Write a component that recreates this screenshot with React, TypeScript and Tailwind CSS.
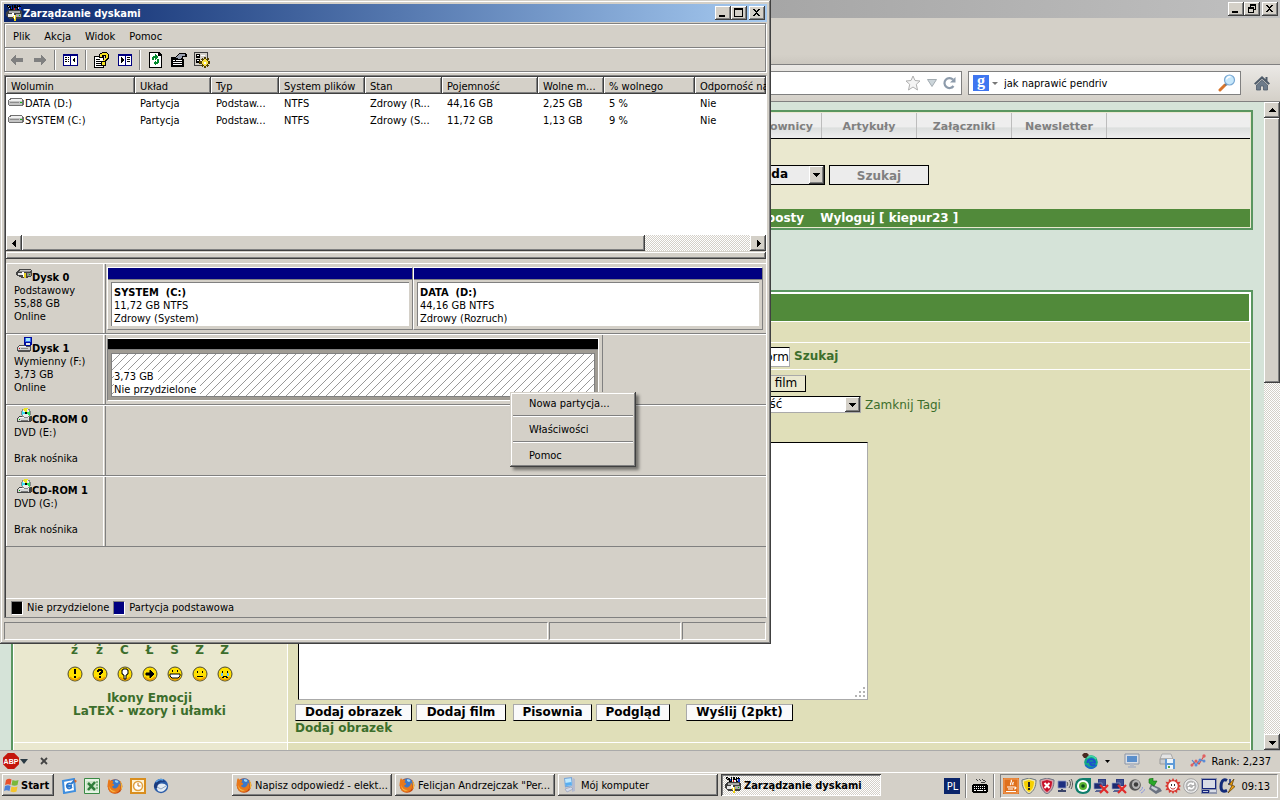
import React from 'react';
import clsx from 'clsx';

// classic Windows bevels
const raised = 'bg-[#d4d0c8] shadow-[inset_-1px_-1px_#404040,inset_1px_1px_#fff,inset_-2px_-2px_#808080]';
const dither = 'bg-[repeating-conic-gradient(#fff_0_25%,#d4d0c8_0_50%)] bg-[length:2px_2px]';
const ui = "font-['DejaVu_Sans_Condensed','DejaVu_Sans',sans-serif] text-[11px] leading-[13px] text-black";
const forum = "font-['DejaVu_Sans',sans-serif] text-[12px] leading-[13px]";

type IconProps = { children: React.ReactNode; className?: string; box?: string; crisp?: boolean };

const Svg = ({ children, className = 'size-4', box = '0 0 16 16', crisp }: IconProps) => (
  <svg
    viewBox={box}
    className={clsx('block shrink-0', className)}
    fill="none"
    shapeRendering={crisp ? 'crispEdges' : 'auto'}
    aria-hidden="true"
  >
    {children}
  </svg>
);

const Triangle = ({ dir }: { dir: 'up' | 'down' | 'left' | 'right' }) => (
  <Svg className="size-[9px]" box="0 0 9 9" crisp>
    {dir === 'up' && <path d="M4 2h1v1h1v1h1v1h1v1H1V5h1V4h1V3h1z" fill="#000" />}
    {dir === 'down' && <path d="M1 3h7v1H7v1H6v1H5v1H4V6H3V5H2V4H1z" fill="#000" />}
    {dir === 'left' && <path d="M6 1v7H5V7H4V6H3V5H2V4h1V3h1V2h1V1z" fill="#000" />}
    {dir === 'right' && <path d="M3 1h1v1h1v1h1v1h1v1H6v1H5v1H4v1H3z" fill="#000" />}
  </Svg>
);

const DiskManagerIcon = () => (
  <Svg crisp>
    <path d="M1 0h2v1h2v1h1v3H4V3H2V2H1zM6 0h1v5H6zM8 0h2v3H8zM11 0h1v1h1V0h1v1h1v4h-4V3h-1V2h1z" fill="#000" />
    <path d="M2 1h1v1H2zM3 3h1v1H3zM12 2h1v2h-1z" fill="#c3c3c3" />
    <path d="M5 2h1v2H5zM13 2h2v3h-2z" fill="#0a32d8" />
    <path d="M8 3h1v3H8z" fill="#e01010" />
    <path d="M2 5h12l2 2v5l-2 2H3l-3-3V8z" fill="#404040" />
    <path d="M3 6h11v2H3zM10 9h5v3h-5z" fill="#a9a9a9" />
    <path d="M2 9h5v3H2z" fill="#e8e8e8" />
    <path d="M6 8h2v3H6zM8 10h2v5H8z" fill="#fff" />
    <path d="M9 10h1v6H8v-2h1zM7 11h1v2H7z" fill="#f0d010" />
    <path d="M13 10h1v1h-1z" fill="#0b0" />
  </Svg>
);

const VolumeIcon = () => (
  <Svg crisp>
    <path d="M2 3h12v1h1v1h1v5h-1v1H1v-1H0V5h1V4h1z" fill="#707070" />
    <path d="M3 4h11v1H3zM1 5h13v1H1z" fill="#f0f0f0" />
    <path d="M1 6h13v4H1z" fill="#c4c4c4" />
    <path d="M2 7h9v1H2z" fill="#8c8c8c" />
    <path d="M12 7h2v1h-2z" fill="#12b812" />
  </Svg>
);

const HardDiskIcon = () => (
  <Svg crisp>
    <path d="M3 3h12v1h1v6h-1v1h-3v1H5v-1H3v-1H1V9H0V6h1V5h1V4h1z" fill="#444" />
    <path d="M4 4h11v1H4z" fill="#c6c6c6" />
    <path d="M3 5h11v1H3zM11 7h4v3h-4z" fill="#8e8e8e" />
    <path d="M2 7h4v2H2z" fill="#e3e3e3" />
    <path d="M6 6h2v3H6zM7 9h2v2H7z" fill="#fff" />
    <path d="M8 7h2v5H8z" fill="#e8d020" />
    <path d="M13 8h1v1h-1z" fill="#0b0" />
  </Svg>
);

const RemovableIcon = () => (
  <Svg crisp>
    <path d="M3 8h11v1h1v5h-1v1H2v-1H1v-4h1V9h1z" fill="#505050" />
    <path d="M2 10h12v3H2z" fill="#cfcfcf" />
    <path d="M3 9h7v1H3z" fill="#f4f4f4" />
    <path d="M3 11h1v1H3z" fill="#e00000" />
    <path d="M5 11h7v1H5z" fill="#888" />
    <path d="M8 0h8v8h-1v1H9V8H8z" fill="#000c9c" />
    <path d="M9 1h6v4H9z" fill="#3a6cf0" />
    <path d="M10 1h4v3h-4z" fill="#9fe8ff" />
    <path d="M10 6h4v2h-4z" fill="#e8e8e8" />
  </Svg>
);

const CdIcon = () => (
  <Svg crisp>
    <path d="M3 8l-2 2v4h13l2-2V8z" fill="#444" />
    <path d="M2 10h11v3H2z" fill="#d6d6d6" />
    <path d="M3 9h10v1H3z" fill="#f6f6f6" />
    <path d="M3 11h1v1H3z" fill="#0b0" />
    <path d="M5 12h7v1H5z" fill="#777" />
    <circle cx="10" cy="5" r="5" fill="#888" />
    <circle cx="10" cy="5" r="4" fill="#ececec" />
    <path d="M10 5L7 1l2-1h3z" fill="#e9e320" />
    <path d="M10 5l4-2v5z" fill="#2ce060" />
    <path d="M10 5L6 7V3z" fill="#36dff2" />
    <path d="M9 4h2v2H9z" fill="#000" />
  </Svg>
);

const FirefoxIcon = () => (
  <Svg>
    <circle cx="8" cy="8.5" r="7.3" fill="#c7480e" />
    <circle cx="8.5" cy="6.5" r="5.2" fill="#3c78c8" />
    <path d="M8 2.500c1.500-.8 3 0 3.500 1.500L10 5 8 4z" fill="#9fd8f5" />
    <path d="M1 4c0-1.500.6-2.500 1.200-3 .2 1 .8 1.500 1.600 1.800C5 2.500 6 3 6.500 3.800L5.300 5.500l1.800.8-.4 1.400-1.700.8c.5 1.700 2.300 2.400 4 1.700 1.600-.6 3-2.200 2.800-4.600 2 1.500 1.600 4.500 1 6C11 15.500 7 16 4 14.500 1 12.500.2 8 1 4z" fill="#e8781a" />
    <path d="M13 3c2 1.500 2.700 4.500 2 7.500l-1.500 2C14.200 9 14 6 13 3z" fill="#f6b53a" />
    <path d="M2 8c1 3.500 4 5.500 7 5-2.500 1.700-6 .8-7-5z" fill="#f9c04a" />
  </Svg>
);

const ComputerIcon = () => (
  <Svg>
    <path d="M2 1l8-1 1 9-8 1.500z" fill="#7aa6d8" />
    <path d="M3 2l6-.8.8 7L4 9z" fill="#bfeaff" />
    <path d="M3 6l6.500-1 .4 3L4 9z" fill="#58aef0" />
    <path d="M11 1l2 1v12l-3 1V9z" fill="#b5bcd0" />
    <path d="M3 12l6-2 2 2-6 3z" fill="#d5dceb" stroke="#8a95b5" strokeWidth=".6" />
  </Svg>
);

const LanIcon = () => (
  <Svg>
    <path d="M5 1h8v7H5z" fill="#2b3b82" />
    <path d="M6 2h6v5H6z" fill="#3e4f90" />
    <path d="M1 5h8v6H1z" fill="#1d2b70" stroke="#9aa4c8" strokeWidth=".7" />
    <path d="M3 12h5v1H3zM2 13h7v1H2z" fill="#5a6795" />
    <path d="M7 7l8 8M15 7l-8 8" stroke="#e02a2a" strokeWidth="2.200" />
  </Svg>
);

const Caption = ({ restore }: { restore?: boolean }) => (
  <div className="flex">
    <button aria-label="Minimalizuj" className={clsx('flex h-[14px] w-4 items-center justify-center', raised)}>
      <Svg className="size-[10px]" box="0 0 10 10" crisp><path d="M1 7h6v2H1z" fill="#000" /></Svg>
    </button>
    <button aria-label={restore ? 'Przywróć' : 'Maksymalizuj'} className={clsx('flex h-[14px] w-4 items-center justify-center', raised)}>
      <Svg className="size-[10px]" box="0 0 10 10" crisp>
        {restore ? (
          <path d="M3 0h6v6H7v3H1V3h2zm1 2v1h3v2h1V2zM2 5v3h4V5z" fill="#000" fillRule="evenodd" />
        ) : (
          <path d="M0 0h9v9H0zm1 2v6h7V2z" fill="#000" fillRule="evenodd" />
        )}
      </Svg>
    </button>
    <button aria-label="Zamknij" className={clsx('ml-[2px] flex h-[14px] w-4 items-center justify-center', raised)}>
      <Svg className="size-[10px]" box="0 0 10 10" crisp>
        <path d="M1 1h2v1h1v1h1V2h1V1h2v1H7v1H6v1H5v1h1v1h1v1h1v1H6V7H5V6H4v1H3v1H1V7h1V6h1V5h1V4H3V3H2V2H1z" fill="#000" />
      </Svg>
    </button>
  </div>
);

const Separator = () => <span className="-ml-px h-5 w-[2px] border-l border-r border-l-[#808080] border-r-white" />;

const Toolbar = () => (
  <div className="flex h-[22px] items-center gap-[7px] pl-1">
    <button aria-label="Wstecz">
      <Svg crisp><path d="M1 8l6-5v3h7v4H7v3z" fill="#808080" /></Svg>
    </button>
    <button aria-label="Dalej">
      <Svg crisp><path d="M15 8l-6-5v3H2v4h7v3z" fill="#808080" /></Svg>
    </button>
    <Separator />
    <button aria-label="Pokaż drzewo">
      <Svg crisp>
        <path d="M0 2h15v12H0z" fill="#000080" />
        <path d="M1 4h6v9H1zM8 4h6v9H8z" fill="#fff" />
        <path d="M2 5h2v1H2zM2 7h2v1H2zM2 9h2v1H2zM5 5h1v1H5zM5 7h1v1H5zM5 9h1v1H5zM12 5v6l-3-3z" fill="#000" />
      </Svg>
    </button>
    <Separator />
    <button aria-label="Pomoc">
      <Svg crisp>
        <path d="M0 4h10v12H0z" fill="#000" />
        <path d="M1 5h8v10H1z" fill="#fff" />
        <path d="M2 7h4v1H2zM2 9h5v1H2zM2 11h6v1H2zM2 13h6v1H2z" fill="#000" />
        <path d="M5 2h1V1h2V0h5v1h1v1h1v5h-1v1h-1v1h-1v5H7V9h2V7h2V4H9v2H5z" fill="#000" />
        <path d="M6 2h2V1h5v1h1v4h-1v1h-1v1h-1v1H9V8h1V7h1V6h1V3H8v2H6zM8 10h3v3H8z" fill="#f4e020" />
      </Svg>
    </button>
    <button aria-label="Pokaż okienko">
      <Svg crisp>
        <path d="M1 2h14v12H1z" fill="#000080" />
        <path d="M2 4h6v9H2zM9 4h5v9H9z" fill="#fff" />
        <path d="M10 5h3v1h-3zM10 7h3v1h-3zM10 9h3v1h-3zM4 5v6l3-3z" fill="#000" />
      </Svg>
    </button>
    <Separator />
    <button aria-label="Odśwież">
      <Svg crisp>
        <path d="M1 0h10l3 3v13H1z" fill="#000" />
        <path d="M2 1h8v3h3v11H2z" fill="#fff" />
        <path d="M4 8V5h1V4h2V2l3 3-3 3V6H6v2zM11 7v4h-1v1H8v2l-3-3 3-3v2h1V7z" fill="#008a2c" />
      </Svg>
    </button>
    <button aria-label="Właściwości">
      <Svg crisp>
        <path d="M0 5h4l4-4h7v1h1v3h-4v2h1v8H0z" fill="#000" />
        <path d="M8 2h6v2h-3v1l-2 2-4-1z" fill="#9aa0b0" />
        <path d="M2 8h2v1H2zM5 8h6v1H5zM2 10h9v1H2zM2 12h9v1H2z" fill="#fff" />
      </Svg>
    </button>
    <button aria-label="Ustawienia">
      <Svg crisp>
        <path d="M0 0h14v14H0z" fill="#404040" />
        <path d="M1 1h12v12H1z" fill="#d4d0c8" />
        <path d="M2 2h4v4H2zM2 7h4v4H2z" fill="#000" />
        <path d="M3 3h2v1H3zM3 8h2v1H3zM7 3h4v1H7zM7 8h4v1H7z" fill="#fff" />
        <path d="M10 5h2v2l2-1 1 1-1 2h2v3h-2l1 2-2 1-1-1v2h-2v-2l-2 1-1-1 1-2H5V9h3L7 7l1-1 2 1z" fill="#504000" />
        <path d="M10 7h2v1h1v1h1v3h-1v1h-1v1h-2v-1H9v-1H8V9h1V8h1z" fill="#f8e040" />
        <path d="M10 10h2v2h-2z" fill="#fff" />
      </Svg>
    </button>
  </div>
);

const columns = [
  { name: 'Wolumin', width: 'w-[129px]' },
  { name: 'Układ', width: 'w-[76px]' },
  { name: 'Typ', width: 'w-[68px]' },
  { name: 'System plików', width: 'w-[86px]' },
  { name: 'Stan', width: 'w-[77px]' },
  { name: 'Pojemność', width: 'w-[96px]' },
  { name: 'Wolne m...', width: 'w-[66px]' },
  { name: '% wolnego', width: 'w-[91px]' },
  { name: 'Odporność na', width: '' },
];

const volumes = [
  ['DATA (D:)', 'Partycja', 'Podstaw...', 'NTFS', 'Zdrowy (R...', '44,16 GB', '2,25 GB', '5 %', 'Nie'],
  ['SYSTEM (C:)', 'Partycja', 'Podstaw...', 'NTFS', 'Zdrowy (S...', '11,72 GB', '1,13 GB', '9 %', 'Nie'],
];

const VolumeList = () => (
  <div>
    <div className="h-[158px] bg-white">
      <table className="w-full table-fixed border-collapse">
        <thead>
          <tr>
            {columns.map((col) => (
              <th
                key={col.name}
                className={clsx('h-[17px] overflow-hidden p-0 pt-px pl-[5px] text-left font-normal whitespace-nowrap', raised, col.width)}
              >
                {col.name}
              </th>
            ))}
          </tr>
        </thead>
        <tbody>
          {volumes.map((row) => (
            <tr key={row[0]}>
              {row.map((cell, i) => (
                <td key={i} className={clsx('h-[17px] p-0 pt-px whitespace-nowrap', i > 0 && 'pl-[5px]')}>
                  {i === 0 ? (
                    <span className="flex h-4 items-center gap-px pl-[2px]">
                      <VolumeIcon />
                      {cell}
                    </span>
                  ) : (
                    cell
                  )}
                </td>
              ))}
            </tr>
          ))}
        </tbody>
      </table>
    </div>
    <div className={clsx('flex h-4', dither)}>
      <button aria-label="Przewiń w lewo" className={clsx('flex w-4 items-center justify-center', raised)}>
        <Triangle dir="left" />
      </button>
      <div className={clsx('w-[82%]', raised)} />
      <button aria-label="Przewiń w prawo" className={clsx('ml-auto flex w-4 items-center justify-center', raised)}>
        <Triangle dir="right" />
      </button>
    </div>
  </div>
);

type DiskRowProps = { icon: React.ReactNode; name: string; lines: string[]; children?: React.ReactNode };

const DiskRow = ({ icon, name, lines, children }: DiskRowProps) => (
  <div className="flex h-[71px] border-t border-b border-t-white border-b-[#808080]">
    <div className="w-[98px] shrink-0 border-r border-l border-white pl-[7px]">
      <div className="flex h-5 items-end pl-[2px] font-bold">
        <span className="self-center">{icon}</span>
        {name}
      </div>
      {lines.map((line, i) => (
        <div key={i} className="h-[13px]">{line}</div>
      ))}
    </div>
    <div className="ml-px flex grow border-l border-[#808080] py-[3px] pr-[3px] pl-px">{children}</div>
  </div>
);

const Partition = ({ name, size, state, grow }: { name: string; size: string; state: string; grow: string }) => (
  <div className={clsx('flex flex-col border border-t-white border-r-[#808080] border-b-[#808080] border-l-white', grow)}>
    <div className="h-3 border-b border-[#808080] bg-[#000080]" />
    <div className="m-[3px] mt-[2px] grow border-t border-l border-[#808080] bg-white pt-[3px] pl-[2px]">
      <div className="font-bold whitespace-pre">{name}</div>
      <div>{size}</div>
      <div>{state}</div>
    </div>
  </div>
);

const DiskGraph = () => (
  <div>
    <DiskRow icon={<HardDiskIcon />} name="Dysk 0" lines={['Podstawowy', '55,88 GB', 'Online']}>
      <Partition name="SYSTEM  (C:)" size="11,72 GB NTFS" state="Zdrowy (System)" grow="basis-[306px]" />
      <Partition name="DATA  (D:)" size="44,16 GB NTFS" state="Zdrowy (Rozruch)" grow="grow basis-[350px]" />
    </DiskRow>
    <DiskRow icon={<RemovableIcon />} name="Dysk 1" lines={['Wymienny (F:)', '3,73 GB', 'Online']}>
      <div className="flex w-[75%] flex-col border border-t-white border-r-white border-b-white border-l-[#808080]">
        <div className="h-3 border-b border-[#808080] bg-black" />
        <div className="grow bg-[#a09c94] p-[3px]">
          <div className="h-full border border-[#808080] bg-white bg-[linear-gradient(135deg,transparent_46%,#999_47%_53%,transparent_54%)] bg-[length:8px_8px] pt-4 pl-[2px]">
            <div><span className="bg-white pr-1">3,73 GB</span></div>
            <div><span className="bg-white pr-1">Nie przydzielone</span></div>
          </div>
        </div>
      </div>
      <div className="-my-[3px] ml-[3px] w-px bg-[#808080]" />
    </DiskRow>
    <DiskRow icon={<CdIcon />} name="CD-ROM 0" lines={['DVD (E:)', '', 'Brak nośnika']} />
    <DiskRow icon={<CdIcon />} name="CD-ROM 1" lines={['DVD (G:)', '', 'Brak nośnika']} />
  </div>
);

const ContextMenu = () => (
  <div
    role="menu"
    className="absolute top-[392px] left-[510px] w-[126px] bg-[#d4d0c8] px-[3px] pt-[2px] pb-[3px] shadow-[inset_-1px_-1px_#404040,inset_1px_1px_#d4d0c8,inset_-2px_-2px_#808080,inset_2px_2px_#fff,3px_3px_3px_rgba(0,0,0,0.45)]"
  >
    {['Nowa partycja...', 'Właściwości', 'Pomoc'].map((item, i) => (
      <React.Fragment key={item}>
        {i > 0 && <div className="my-[3px] h-[2px] border-t border-b border-t-[#808080] border-b-white" />}
        <button role="menuitem" className="block h-[18px] w-full pl-4 text-left">{item}</button>
      </React.Fragment>
    ))}
  </div>
);

const sunken = 'border border-t-[#808080] border-r-white border-b-white border-l-[#808080]';

const DiskManager = () => (
  <div className={clsx('absolute top-0 left-0 w-[771px] max-w-full bg-[#d4d0c8] p-1 shadow-[inset_-1px_-1px_#404040,inset_1px_1px_#d4d0c8,inset_-2px_-2px_#808080,inset_2px_2px_#fff]', ui)}>
    <div className="flex h-[18px] items-center bg-linear-to-r from-[#0a246a] to-[#a6caf0] pr-[2px] pl-[2px]">
      <DiskManagerIcon />
      <h1 className="ml-px grow text-[11px] font-bold text-white">Zarządzanie dyskami</h1>
      <Caption />
    </div>

    <div className="mt-px mr-px border border-[#808080] shadow-[1px_1px_#fff,inset_1px_1px_#fff]">
      <div className="flex h-6 items-center gap-[14px] border-b border-[#808080] pt-px pl-2">
        {['Plik', 'Akcja', 'Widok', 'Pomoc'].map((item) => (
          <button key={item}>{item}</button>
        ))}
      </div>
      <div className="border-t border-white">
        <Toolbar />
      </div>
    </div>

    <div className="mt-[3px] border-t border-r border-b border-l border-t-[#808080] border-r-white border-b-[#808080] border-l-[#808080]">
      <div className="border-t border-l border-[#404040]">
        <VolumeList />
        <div className={clsx('mt-px h-[7px]', raised)} />
        <div className="mt-1">
          <DiskGraph />
          <div className="mt-[51px] flex h-[19px] items-center gap-1 border-t border-white pb-px pl-[5px]">
            <span className={clsx('h-[14px] w-3 bg-black', sunken)} />
            <span>Nie przydzielone</span>
            <span className={clsx('h-[14px] w-3 bg-[#000080]', sunken)} />
            <span>Partycja podstawowa</span>
          </div>
        </div>
      </div>
    </div>

    <div className="mt-1 flex h-[18px] gap-px pr-px">
      <div className={clsx('grow', sunken)} />
      <div className={clsx('w-[132px]', sunken)} />
      <div className={clsx('w-[84px]', sunken)} />
    </div>
    <ContextMenu />
  </div>
);

const BrowserChrome = () => (
  <div className={ui}>
    <div className="flex h-[18px] justify-end bg-linear-to-r from-[#808080] to-[#c0c0c0] pt-[2px] pr-[2px]">
      <Caption restore />
    </div>
    <div className="h-[46px] bg-linear-to-b from-[#d4d0c8] from-80% to-[#cbc7bf]" />
    <div className="flex h-[38px] items-center gap-[6px] border-t border-b border-[#808080] bg-linear-to-b from-[#ebe9e6] to-[#d4d0c8] px-[10px]">
      <div className="flex h-6 grow items-center justify-end gap-[6px] border border-[#808080] bg-white pr-1">
        <Svg><path d="M8 1l2 4.500 5 .5-3.700 3.300L12.500 15 8 12l-4.500 3 1.200-5.700L1 6l5-.5z" fill="#f4f4f4" stroke="#b0b0b0" /></Svg>
        <Svg className="size-[10px]" box="0 0 10 10"><path d="M.5 1.500h9L5 8.500z" fill="#ccd5da" stroke="#a3acb1" /></Svg>
        <Svg className="size-[14px]" box="0 0 14 14">
          <path d="M10.500 10A5 5 0 1 1 10 3.500" stroke="#8d9bab" strokeWidth="2.200" />
          <path d="M12.500 1v5.500H7z" fill="#8d9bab" />
        </Svg>
      </div>
      <div className="flex h-6 w-[273px] items-center border border-[#808080] bg-white px-1">
        <span className="flex size-4 shrink-0 items-center justify-center bg-[#3f76f0] font-['Liberation_Serif',serif] text-[16px] leading-[12px] font-bold text-white">
          <span className="pb-1">g</span>
        </span>
        <Svg className="ml-[3px] h-[3px] w-[6px]" box="0 0 6 3"><path d="M0 0h6L3 3z" fill="#777" /></Svg>
        <input aria-label="Szukaj w Google" defaultValue="jak naprawić pendriv" className="ml-[6px] min-w-0 grow outline-none" />
        <Svg className="size-[18px]" box="0 0 18 18">
          <path d="M2 16l5-5" stroke="#d8742a" strokeWidth="3" strokeLinecap="round" />
          <path d="M7 11l2-1" stroke="#777" strokeWidth="2" />
          <circle cx="11.500" cy="6" r="5" fill="#c6e7fb" stroke="#7aa9d4" strokeWidth="1.200" />
          <path d="M8.500 5.500a3 3 0 0 1 4-2.500" stroke="#fff" strokeWidth="1.500" />
        </Svg>
      </div>
      <button aria-label="Strona startowa" className="ml-[7px]">
        <Svg>
          <path d="M8 1L0 8.500l1.500 1.200L8 4l6.500 5.700L16 8.500l-2.500-2.400V2h-2v2.200z" fill="#4e5b69" />
          <path d="M2.500 10L8 5.200 13.500 10v5h-4v-4h-3v4h-4z" fill="#6d7b8a" stroke="#4e5b69" strokeWidth=".8" />
        </Svg>
      </button>
    </div>
  </div>
);

const SelectArrow = () => (
  <span className={clsx('flex w-[15px] shrink-0 items-center justify-center', raised)}>
    <Triangle dir="down" />
  </span>
);

const ForumHeader = () => (
  <div className="mx-[11px] border-2 border-[#5a9660] bg-[#eae8cf] p-px font-bold">
    <nav className="flex h-[26px] border-b border-black bg-linear-to-b from-[#eee] from-55% via-[#dcdfde] via-60% to-[#eee] pl-[713px] text-[11px] text-[#808080]">
      {['Użytkownicy', 'Artykuły', 'Załączniki', 'Newsletter'].map((item) => (
        <a key={item} href="#" className="flex w-[95px] shrink-0 items-center justify-center border-r border-[#bdbdbd] pt-px">
          {item}
        </a>
      ))}
    </nav>
    <div className="flex h-[70px] items-center gap-1 pt-px pl-[640px]">
      <div className="flex h-5 w-[171px] border border-black bg-[#ececec]">
        <select aria-label="Zakres" className="min-w-0 grow appearance-none pl-[68px] font-bold text-black outline-none">
          <option>Elektroda</option>
        </select>
        <SelectArrow />
      </div>
      <button className="h-5 w-[100px] border border-black bg-[#ececec] pt-1 font-bold text-[#808080]">Szukaj</button>
    </div>
    <div className="flex h-[18px] items-center gap-4 bg-[#518a3a] pl-[716px] text-white">
      <a href="#" className="whitespace-nowrap">Moje posty</a>
      <a href="#" className="whitespace-nowrap">Wyloguj [ kiepur23 ]</a>
    </div>
  </div>
);

const faces = [
  <path key="f" d="M7 3h2v5H7zM7 10h2v2H7z" fill="#000" />,
  <path key="f" d="M5 4h1V3h4v1h1v3h-1v1H9v1H7V7h1V6h1V5H7v1H5zM7 10h2v2H7z" fill="#000" />,
  <path key="f" d="M6 3h4v1h1v4h-1v1H9v4H7V9H6V8H5V4h1z" fill="#fff" stroke="#000" />,
  <path key="f" d="M4 7h4V4l4 4-4 4V9H4z" fill="#000" stroke="#000" />,
  <g key="f"><path d="M5 4h1v2H5zM10 4h1v2h-1z" fill="#000" /><path d="M3 8h10v2l-2 2H5l-2-2z" fill="#fff" stroke="#000" /></g>,
  <path key="f" d="M5 5h1v2H5zM10 5h1v2h-1zM5 10h6v1H5z" fill="#000" />,
  <g key="f"><path d="M5 5h1v2H5zM10 5h1v2h-1zM6 10h4v1h1v1H9v-1H7v1H5v-1h1z" fill="#000" /><path d="M4 7h2v3H4zM10 7h2v3h-2z" fill="#6cc4f0" /></g>,
];

const postButton = 'h-[17px] border border-t-[#aaa] border-r-black border-b-black border-l-[#aaa] bg-[#fafafa] font-bold text-black';

const PostForm = () => (
  <div className="mx-[11px] mt-[60px] flex min-h-0 grow flex-col border-2 border-b-0 border-[#5a9660] bg-white px-px pt-[2px]">
    <div className="mr-px h-[27px] shrink-0 bg-[#518a3a]" />
    <div className="mt-px flex min-h-0 grow gap-px">
      <aside className="flex w-[273px] shrink-0 flex-col gap-px overflow-hidden font-bold text-[#3c6e2c]">
        <div className="flex h-[420px] shrink-0 flex-col items-center justify-end bg-[#eae8cf] pr-[2px] pb-6">
          <div className="flex">
            {['ź', 'ż', 'Ć', 'Ł', 'Ś', 'Ź', 'Ż'].map((letter) => (
              <a key={letter} href="#" className="w-[25px] text-center">{letter}</a>
            ))}
          </div>
          <div className="mt-[9px] mb-[10px] flex">
            {faces.map((face, i) => (
              <button key={i} aria-label={`Emotikon ${i + 1}`} className="flex w-[25px] justify-center">
                <Svg>
                  <circle cx="8" cy="8" r="7" fill="#ffe000" stroke="#4a4630" />
                  <path d="M3 11a6 6 0 0 0 10 0" stroke="#f0a000" strokeWidth="1.500" />
                  {face}
                </Svg>
              </button>
            ))}
          </div>
          <a href="#">Ikony Emocji</a>
          <a href="#">LaTEX - wzory i ułamki</a>
        </div>
        <div className="h-10 shrink-0 bg-[#eae8cf] pt-[5px] pl-[5px] text-[11px] text-black">Szuka</div>
      </aside>
      <div className="flex min-w-0 grow flex-col gap-px overflow-hidden">
        <div className="h-5 shrink-0 bg-[#e0dfb9]" />
        <div className="flex h-[26px] shrink-0 items-center gap-1 bg-[#e0dfb9] pt-px pl-[400px]">
          <input
            aria-label="Fraza"
            defaultValue="form"
            className="h-5 w-[102px] border border-t-black border-r-[#aaa] border-b-[#aaa] border-l-black bg-white text-right text-black outline-none"
          />
          <a href="#" className="font-bold text-[#3c6e2c]">Szukaj</a>
        </div>
        <div className="flex h-[372px] shrink-0 flex-col items-start bg-[#e0dfb9] pt-[5px] pl-[7px]">
          <button className="ml-[471px] h-[17px] w-10 border border-t-[#aaa] border-r-black border-b-black border-l-[#aaa] bg-[#eae8cf] text-black">film</button>
          <div className="mt-1 ml-[400px] flex items-center gap-1">
            <div className="flex h-[17px] w-[166px] border border-t-black border-r-[#aaa] border-b-[#aaa] border-l-black bg-white">
              <select aria-label="Wielkość" className="min-w-0 grow appearance-none pl-[34px] text-black outline-none">
                <option>Wielkość</option>
              </select>
              <SelectArrow />
            </div>
            <a href="#" className="pt-px text-[#3c6e2c]">Zamknij Tagi</a>
          </div>
          <div className="relative mt-[29px] ml-[3px] h-[258px] w-[570px] shrink-0">
            <textarea
              aria-label="Treść odpowiedzi"
              className="block size-full resize-none border border-t-black border-r-[#aaa] border-b-[#aaa] border-l-black bg-white outline-none"
            />
            <Svg className="absolute right-[2px] bottom-[2px] size-[11px]" box="0 0 11 11" crisp>
              <path d="M8 0h2v2H8zM4 4h2v2H4zM8 4h2v2H8zM0 8h2v2H0zM4 8h2v2H4zM8 8h2v2H8z" fill="#b4b4b4" />
            </Svg>
          </div>
          <div className="mt-1 flex">
            <button className={clsx(postButton, 'w-[117px]')}>Dodaj obrazek</button>
            <button className={clsx(postButton, 'ml-1 w-[90px]')}>Dodaj film</button>
            <button className={clsx(postButton, 'ml-[7px] w-[79px]')}>Pisownia</button>
            <button className={clsx(postButton, 'ml-1 w-[74px]')}>Podgląd</button>
            <button className={clsx(postButton, 'ml-4 w-[107px]')}>Wyślij (2pkt)</button>
          </div>
          <a href="#" className="pt-px font-bold text-[#3c6e2c]">Dodaj obrazek</a>
        </div>
        <div className="h-10 shrink-0 bg-[#e0dfb9]" />
      </div>
    </div>
  </div>
);

const StatusBar = () => (
  <div className={clsx('flex h-[22px] shrink-0 items-center border-t border-[#aaa] bg-[#d4d0c8] pr-[9px] pb-px pl-[3px]', ui)}>
    <span className="flex size-4 items-center justify-center bg-[#c4160c] font-['Liberation_Sans',sans-serif] text-[7px] font-bold text-white [clip-path:polygon(30%_0,70%_0,100%_30%,100%_70%,70%_100%,30%_100%,0_70%,0_30%)]">
      ABP
    </span>
    <Svg className="ml-px h-[5px] w-[8px]" box="0 0 8 5"><path d="M0 0h8L4 5z" fill="#2a3a44" /></Svg>
    <button aria-label="Zamknij pasek" className="ml-3">
      <Svg className="size-2" box="0 0 8 8"><path d="M1 1l6 6M7 1L1 7" stroke="#444" strokeWidth="1.800" /></Svg>
    </button>
    <span className="grow" />
    <Svg>
      <circle cx="9" cy="9" r="6.800" fill="#14a884" />
      <path d="M3.500 12c3 4 8 4 11 0" stroke="#1a6cc8" strokeWidth="2" />
      <path d="M5.500 10c0-5 7.500-5 7.500-.5H8c0 3 3 3.500 5 2" stroke="#1a4fd0" strokeWidth="2" />
      <path d="M5 5c3-3 7-2 9 1" stroke="#41d6a8" strokeWidth="1.500" />
      <path d="M0 2l2-2 3 0 2 2-3 3-2 0z" fill="#4a2a22" />
    </Svg>
    <Svg className="ml-[7px] h-[3px] w-[5px]" box="0 0 5 3"><path d="M0 0h5L2.500 3z" fill="#000" /></Svg>
    <Svg className="ml-[14px] size-4">
      <path d="M1 1h14v10H1z" fill="#d9dde4" stroke="#8b95a5" />
      <path d="M3 3h10v6H3z" fill="#5a8ecb" />
      <path d="M6 11h4v2h2v2H4v-2h2z" fill="#b5bac4" />
    </Svg>
    <Svg className="ml-[19px] size-4">
      <path d="M3 1h9l2 5H1z" fill="#e4e4e4" stroke="#aaa" />
      <path d="M1 6h13v5H1z" fill="#c9ccd0" stroke="#999" />
      <path d="M6 6h10v10H6z" fill="#5f9ad8" />
      <path d="M8 6h6v4H8zM8 12h6v4H8z" fill="#eef5fb" />
      <path d="M9 13h2v2H9z" fill="#54a840" />
    </Svg>
    <Svg className="mx-[5px] ml-[15px] size-4">
      <path d="M1 13l5-5 3 3 5-8" stroke="#d95050" strokeWidth="1.200" />
      <path d="M2 7l4 5 4-5 4 1" stroke="#5583c8" strokeWidth="1.200" />
      <g fill="#e06060"><circle cx="2" cy="12" r="1.500" /><circle cx="6" cy="8" r="1.500" /><circle cx="14" cy="3" r="1.700" /></g>
      <g fill="#5a8cd8"><circle cx="6" cy="12" r="1.500" /><circle cx="10" cy="7" r="1.500" /><circle cx="14" cy="8" r="1.500" /></g>
    </Svg>
    <span>Rank: 2,237</span>
  </div>
);

const tasks = [
  { icon: <FirefoxIcon />, title: 'Napisz odpowiedź - elekt...' },
  { icon: <FirefoxIcon />, title: 'Felicjan Andrzejczak "Per...' },
  { icon: <ComputerIcon />, title: 'Mój komputer' },
  { icon: <DiskManagerIcon />, title: 'Zarządzanie dyskami', active: true },
];

const Tray = () => (
  <div className={clsx('flex h-6 items-center gap-[2px] pr-[7px] pl-[2px]', sunken)}>
    <Svg>
      <path d="M0 0h16v16H0z" fill="#e0701c" />
      <path d="M1 1h14v14H1z" stroke="#f0a060" />
      <path d="M8 2c2 2-2 3 0 5M10.500 4c-1 1-1 2-.5 3M4 9h7M11 9c3 0 2 2 0 2M5 11h5M3 13.500h10" stroke="#fff" strokeWidth="1.200" />
    </Svg>
    <Svg>
      <path d="M8 0l7 2c0 7-2 11-7 14C3 13 1 9 1 2z" fill="#f4e8a0" stroke="#6b7686" />
      <path d="M8 2l5 1.500c0 5-1.500 8-5 10.500-3.500-2.500-5-5.500-5-10.500z" fill="#f6d000" />
      <path d="M7 4h2v5H7zM7 10h2v2H7z" fill="#222" />
    </Svg>
    <Svg>
      <path d="M8 0l7 2c0 7-2 11-7 14C3 13 1 9 1 2z" fill="#d8a0a8" stroke="#6b7686" />
      <path d="M8 2l5 1.500c0 5-1.500 8-5 10.500-3.500-2.500-5-5.500-5-10.500z" fill="#c8102a" />
      <path d="M5.500 5l5 5M10.500 5l-5 5" stroke="#fff" strokeWidth="2" />
    </Svg>
    <Svg>
      <path d="M1 3h8v7H1z" fill="#1d2f80" stroke="#8d98c0" strokeWidth=".8" />
      <path d="M4 11h2v1h3v2H1v-2h3z" fill="#3a4468" />
      <path d="M10 4c1 1 1 3 0 4M12 2c2 2 2 5 0 8M14 1c2 3 2 7 0 10" stroke="#555" />
    </Svg>
    <Svg>
      <path d="M8 0h8v8c0 5-3 8-8 8s-8-3-8-8 3-8 8-8z" fill="#0e7d6c" />
      <circle cx="8" cy="8" r="6" fill="#fff" />
      <circle cx="8" cy="8" r="4" fill="#5ab430" />
      <circle cx="8" cy="8" r="1.800" fill="#0c4a1c" />
    </Svg>
    <LanIcon />
    <LanIcon />
    <Svg>
      <circle cx="6" cy="7" r="5.800" fill="#555" />
      <ellipse cx="7" cy="6.500" rx="4" ry="4.500" fill="#b4b4b4" />
      <circle cx="7" cy="6.500" r="2.200" fill="#3c3c3c" />
      <path d="M10.500 13c2-1 3-2 3-4M12 15c2-1 3-2 4-4" stroke="#8d98e0" />
    </Svg>
    <Svg>
      <path d="M4 6l9 4 2 3-6 3-7-5z" fill="#6b7280" />
      <path d="M5 8l6 3-2 2-5-3z" fill="#c9ced6" />
      <path d="M2 1l4-1v3h4L7 8 2 5z" fill="#2aa82a" stroke="#106a10" strokeWidth=".6" />
    </Svg>
    <Svg>
      <path d="M8 0l1.500 2.500L12 1l.5 3 3-.2L14 6.500 16 8l-2 1.500 1.500 2.700-3-.2-.5 3-2.500-1.500L8 16l-1.500-2.500L4 15l-.5-3-3 .2L2 9.500 0 8l2-1.500L.5 3.800l3 .2L4 1l2.500 1.500z" fill="#d83c34" />
      <circle cx="8" cy="8" r="4.700" fill="#fff" />
      <path d="M6 6h1v2H6zM9 6h1v2H9z" fill="#333" />
      <path d="M5.500 9.500c1 2 4 2 5 0" stroke="#c02020" />
    </Svg>
    <Svg>
      <circle cx="8" cy="8" r="7.300" fill="#f0f0f0" stroke="#a0a0a0" />
      <circle cx="8" cy="8" r="5.500" fill="#b4b4b4" />
      <path d="M5 8a3 3 0 0 1 5-2M11 8a3 3 0 0 1-5 2" stroke="#fff" strokeWidth="1.500" />
      <path d="M11 4v3H8zM5 12V9h3z" fill="#fff" />
    </Svg>
    <Svg crisp>
      <path d="M0 0h16v16H0z" fill="#8f96ad" />
      <path d="M1 1h14v10H1z" fill="#16267c" />
      <path d="M2 2h12v8H2zM9 12h6v2H9z" fill="#d8dce6" />
      <path d="M1 12h7v3H1z" fill="#16267c" />
      <path d="M2 13h5v1H2z" fill="#c3cadd" />
    </Svg>
    <Svg>
      <path d="M8 2.500C4 0 2 4 2 8.500S4 14 8 12.500" stroke="#122a78" strokeWidth="3" />
      <path d="M11 1v5H9" stroke="#122a78" strokeWidth="1.500" />
      <path d="M15 1l-5 5.500 3 1L9 15l7-6.500-3-1.500z" fill="#f0a010" stroke="#5a3a00" strokeWidth=".7" />
    </Svg>
    <time className="ml-1">09:13</time>
  </div>
);

const Taskbar = () => (
  <div className={clsx('flex h-7 shrink-0 items-start border-t border-white bg-[#d4d0c8] px-[2px] pt-px', ui)}>
    <button className={clsx('flex h-[22px] w-[52px] items-center gap-px pl-[2px] font-bold', raised)}>
      <Svg>
        <path d="M2 3c2-1.500 4-1.500 5.500-.5L6.500 8C5 7 3 7 1 8z" fill="#e8502c" />
        <path d="M8.500 3c2 1 4 1 6 0l-1 5c-2 1-4 1-6 0z" fill="#7ab83c" />
        <path d="M1 9c2-1 4-1 5.500 0l-1 5c-2-1-4-1-5.500 0z" fill="#4a80d8" />
        <path d="M7.500 9.500c2 1 4 1 6 0l-1 5c-2 1-4 1-6 0z" fill="#f4c42c" />
      </Svg>
      Start
    </button>
    <div className="ml-[7px] flex h-6 items-center gap-[7px]">
      <button aria-label="Pokaż pulpit">
        <Svg>
          <path d="M2 3l11-2 1 12-11 2z" fill="#fff" stroke="#3f8ede" strokeWidth="2" />
          <path d="M11 6C7 4 5 7 6 9s3 2 5 0M6 8h5M10 6l4-4" stroke="#2c78cc" strokeWidth="1.800" />
          <path d="M13 1l3 2-2 2z" fill="#e06a28" />
        </Svg>
      </button>
      <button aria-label="Excel">
        <Svg>
          <path d="M.5.500h15v15H.5z" fill="#e6f3e4" stroke="#3a8a44" />
          <path d="M2 3h12v10H2z" fill="#cfe6cc" />
          <path d="M4 5l7 7M11 4l-7 8" stroke="#2f7d3a" strokeWidth="2.500" />
          <path d="M12 4h2M12 7h2M12 10h2" stroke="#3a8a44" />
        </Svg>
      </button>
      <button aria-label="Firefox"><FirefoxIcon /></button>
      <button aria-label="Outlook">
        <Svg>
          <path d="M1 1h14v14H1z" fill="#fdf2d4" stroke="#d98e1e" strokeWidth="2" />
          <circle cx="8" cy="8" r="4.500" fill="#fff" stroke="#e0a040" strokeWidth="1.500" />
          <path d="M8 5v3h2.500" stroke="#c07818" />
        </Svg>
      </button>
      <button aria-label="Thunderbird">
        <Svg>
          <circle cx="8" cy="8" r="7.200" fill="#2b5ca8" />
          <path d="M3 9c2-4 8-5 11-1-1 5-6 7-9 5z" fill="#e4ecf4" />
          <path d="M4 9l4 2 5-3" stroke="#90a6c0" />
          <path d="M1 8c1-6 8-8 12-4-5-1-8 0-9 6-1 1-3 0-3-2z" fill="#1a3a7c" />
          <path d="M3 4c2-2 5-3 7-2" stroke="#58a0e4" strokeWidth="1.500" />
        </Svg>
      </button>
    </div>
    <div className="ml-[63px] flex min-w-0 gap-[3px]">
      {tasks.map((task) => (
        <button
          key={task.title}
          className={clsx(
            'flex h-[22px] w-40 min-w-0 items-center gap-[3px] overflow-hidden pl-1 whitespace-nowrap',
            task.active
              ? clsx('font-bold shadow-[inset_1px_1px_#404040,inset_-1px_-1px_#fff,inset_2px_2px_#808080]', dither)
              : raised
          )}
        >
          {task.icon}
          {task.title}
        </button>
      ))}
    </div>
    <div className="ml-auto flex h-6 shrink-0 items-center">
      <span className="flex size-4 items-center justify-center bg-[#0a246a] text-white">PL</span>
      <span className="mx-[5px] h-6 w-[2px] border-l border-r border-l-[#808080] border-r-white" />
      <Svg crisp>
        <path d="M4 1h1v1h1v1H5V2H4zM7 1h1v1h1v1H8V2H7zM10 1h1v1h2v1h1v1h-1V3h-2V2h-1zM9 4h4v1H9z" fill="#444" />
        <path d="M1 6h14v1h1v7h-1v1H1v-1H0V7h1z" fill="#000" />
        <path d="M2 8.500h12M2 10.500h12" stroke="#fff" strokeDasharray="1 1" />
        <path d="M2 12h2v1H2zM5 12h6v1H5zM12 12h2v1h-2z" fill="#fff" />
      </Svg>
      <span className="mx-[5px] h-6 w-[2px] border-l border-r border-l-[#808080] border-r-white" />
      <Tray />
    </div>
  </div>
);

const App: React.FC = () => {
  return (
    <div className="relative flex h-screen flex-col overflow-hidden bg-[#d4d0c8]">
      <BrowserChrome />
      <div className={clsx('flex min-h-0 grow bg-[#d5e3d8]', forum)}>
        <main className="flex min-w-0 grow flex-col overflow-hidden pt-2">
          <ForumHeader />
          <PostForm />
        </main>
        <div className={clsx('flex w-4 shrink-0 flex-col', dither)}>
          <button aria-label="Przewiń w górę" className={clsx('flex h-4 items-center justify-center', raised)}>
            <Triangle dir="up" />
          </button>
          <div className={clsx('h-[265px]', raised)} />
          <button aria-label="Przewiń w dół" className={clsx('mt-auto flex h-4 items-center justify-center', raised)}>
            <Triangle dir="down" />
          </button>
        </div>
      </div>
      <StatusBar />
      <Taskbar />
      <DiskManager />
    </div>
  );
};

export default App;
